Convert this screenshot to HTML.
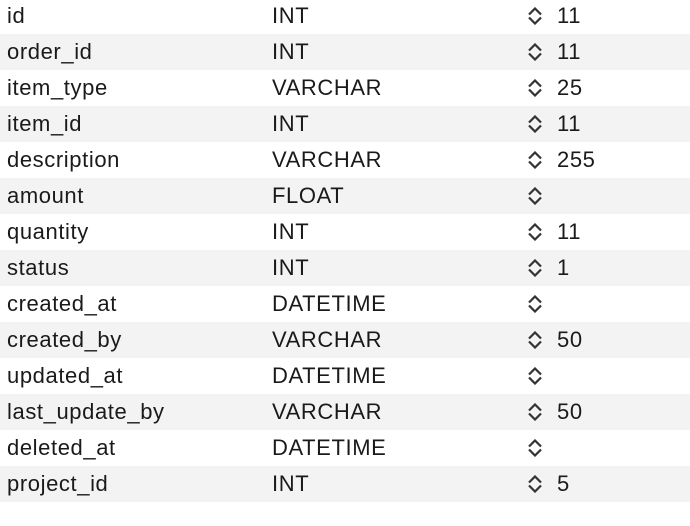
<!DOCTYPE html><html><head><style>
body{margin:0;width:690px;height:526px;background:#fff;overflow:hidden;font-family:"Liberation Sans",sans-serif;font-size:22px;letter-spacing:0.6px;color:#1a1a1a}
.r{position:absolute;left:0;width:690px;height:36px;line-height:36px}
.r:nth-child(even){background:#f3f3f3}
.r span{position:absolute;top:0}
.a{left:7px}.b{left:272px}.d{left:557px}
.r .c{left:527px;top:9px;height:18px;line-height:0}
</style></head><body>
<div id="w"></div>
<script>
const rows=[["id","INT","11"],["order_id","INT","11"],["item_type","VARCHAR","25"],["item_id","INT","11"],["description","VARCHAR","255"],["amount","FLOAT",""],["quantity","INT","11"],["status","INT","1"],["created_at","DATETIME",""],["created_by","VARCHAR","50"],["updated_at","DATETIME",""],["last_update_by","VARCHAR","50"],["deleted_at","DATETIME",""],["project_id","INT","5"]];
let h="";rows.forEach((r,i)=>{h+=`<div class="r" style="top:${-2+i*36}px"><span class="a">${r[0]}</span><span class="b">${r[1]}</span><span class="c"><svg width="16" height="18" viewBox="0 0 16 18" style="display:block"><path d="M2 7.5L8 1.5L14 7.5M2 10.5L8 16.5L14 10.5" fill="none" stroke="#333" stroke-width="2.2"/></svg></span><span class="d">${r[2]}</span></div>`});
document.getElementById("w").innerHTML=h;
</script>
</body></html>
